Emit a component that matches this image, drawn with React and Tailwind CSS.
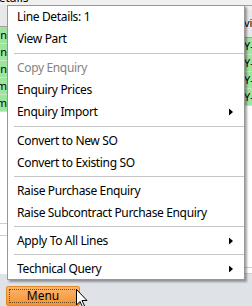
import React from 'react';

const items = [
  { label: 'Line Details: 1', h: 'h-[22px]' },
  { label: 'View Part', h: 'h-[22px]' },
  { sep: true },
  { label: 'Copy Enquiry', h: 'h-[22px]', disabled: true },
  { label: 'Enquiry Prices', h: 'h-[22px]' },
  { label: 'Enquiry Import', h: 'h-[22px]', sub: true },
  { sep: true },
  { label: 'Convert to New SO', h: 'h-[22px]' },
  { label: 'Convert to Existing SO', h: 'h-[21px]' },
  { sep: true },
  { label: 'Raise Purchase Enquiry', h: 'h-[22px]' },
  { label: 'Raise Subcontract Purchase Enquiry', h: 'h-[21px]' },
  { sep: true },
  { label: 'Apply To All Lines', h: 'h-[21px]', sub: true },
  { sep: true },
  { label: 'Technical Query', h: 'h-[21px]', sub: true },
];

function Arrow() {
  return (
    <svg width="4" height="7" viewBox="0 0 4 7" className="absolute right-[11px] top-1/2 -translate-y-1/2">
      <path d="M0 0 L4 3.5 L0 7 Z" fill="#000" />
    </svg>
  );
}

export default function App() {
  return (
    <div className="relative w-[252px] h-[306px] overflow-hidden bg-[#f0f0f0] font-['Noto_Sans',sans-serif] text-[12px]">
      {/* background form */}
      <div className="flex flex-col h-full">
        <div className="relative h-[6px]">
          <span className="absolute left-[-10px] top-[-9px] text-[12px] leading-[14px] text-black">Details</span>
          <div className="absolute left-[28px] right-0 top-[5px] border-t border-[#a0a0a0]" />
        </div>
        <div className="flex-1 flex justify-between">
          <div className="w-[7px] flex flex-col pt-[5px] overflow-hidden">
            <div className="h-[22px] bg-[#e8e8e8] border-b border-[#a0a0a0]" />
            {['en', 'en', 'en', 'm', 'm'].map((t, i) => (
              <div key={i} className="h-[17px] bg-[#9de49d] border-b border-[#c8e8c8] text-[11px] leading-[16px] whitespace-nowrap flex justify-end">{t}</div>
            ))}
            <div className="flex-1 bg-white flex flex-col">
              <div className="h-[100px]" />
              <div className="h-[12px] border-b border-[#cfcfcf]" />
              <div className="h-[12px] border-b border-[#cfcfcf]" />
            </div>
          </div>
          <div className="w-[8px] flex flex-col pt-[10px] overflow-hidden">
            <div className="h-[28px] bg-[#e8e8e8] border-b border-[#a0a0a0] text-[11px] leading-[26px] whitespace-nowrap">vir</div>
            {['Y-', 'Y-', 'Y-', 'Y-'].map((t, i) => (
              <div key={i} className="h-[17px] bg-[#9de49d] border-b border-[#c8e8c8] text-[11px] leading-[16px] whitespace-nowrap">{t}</div>
            ))}
            <div className="flex-1 bg-white flex flex-col">
              <div className="h-[152px]" />
              <div className="h-[10px] border-b border-[#cfcfcf]" />
              <div className="h-[6px] border-b border-[#cfcfcf]" />
            </div>
          </div>
        </div>
        <div className="h-[36px] bg-[#dfe3e8] pt-[12px] pl-[6px]">
          <div className="w-[74px] h-[20px] rounded-[2px] border border-[#e08a2a] bg-gradient-to-b from-[#fdb56a] to-[#f5922e] p-[2px]">
            <div className="h-full border border-dotted border-[#6b4a20] flex items-center justify-center text-[12px] text-black">Menu</div>
          </div>
        </div>
      </div>

      {/* cursor */}
      <svg width="12" height="19" viewBox="0 0 12 19" className="absolute left-[76px] top-[289px]">
        <path d="M0.5 0.5 L0.5 16 L4 12.5 L6.5 18 L8.5 17 L6 11.5 L11 11.5 Z" fill="#fff" stroke="#000" strokeWidth="1" />
      </svg>

      {/* context menu */}
      <div className="absolute left-[7px] top-[5px] w-[238px] bg-white border border-[#979797] shadow-[2px_2px_2px_rgba(0,0,0,0.35)] flex flex-col">
        {items.map((it, i) =>
          it.sep ? (
            <div key={i} className="h-[7px] pl-[6px] pr-0 flex items-center">
              <div className="w-full border-t border-[#c5c5c5]" />
            </div>
          ) : (
            <div key={i} className={`relative ${it.h} flex items-center pl-[9px] tracking-[-0.35px] ${it.disabled ? 'text-[#838383]' : 'text-black'}`}>
              {it.label}
              {it.sub && <Arrow />}
            </div>
          )
        )}
      </div>
    </div>
  );
}
